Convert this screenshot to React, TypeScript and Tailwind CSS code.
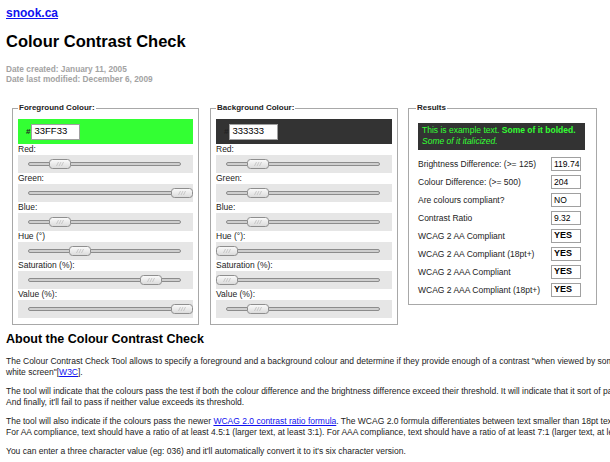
import React from "react";

function Handle() {
  return (
    <svg width="22" height="10" viewBox="0 0 22 10">
      <defs>
        <linearGradient id="hg" x1="0" y1="0" x2="0" y2="1">
          <stop offset="0" stopColor="#fbfbfb" />
          <stop offset="1" stopColor="#dadada" />
        </linearGradient>
      </defs>
      <rect x="0.5" y="0.5" width="21" height="9" rx="3" fill="url(#hg)" stroke="#8e8e8e" />
      <path d="M7.5 7 L9.5 3 M10 7 L12 3 M12.5 7 L14.5 3" stroke="#bdbdbd" strokeWidth="0.8" fill="none" />
    </svg>
  );
}

function Slider({ label, frac, range }: { label: string; frac: number; range: number }) {
  return (
    <div>
      <div className="h-[11px] text-[8.5px] leading-[11px] text-[#222]">{label}</div>
      <div className="relative flex h-[18px] items-center bg-[#e6e6e6] pl-[10px] pr-[12px]">
        <div className="h-[4px] flex-1 rounded-full border border-[#8c8c8c] bg-[#cfcfcf]" />
        <div className="absolute top-[4px] flex" style={{ left: `${Math.round(frac * range)}px` }}>
          <Handle />
        </div>
      </div>
    </div>
  );
}

function ColourPanel({
  title,
  bg,
  value,
  widthClass,
  sliders,
  range,
}: {
  title: string;
  bg: string;
  value: string;
  widthClass: string;
  sliders: [string, number][];
  range: number;
}) {
  return (
    <fieldset className={`${widthClass} border border-[#a8a8a8] px-[5px] pb-[6px] pt-[6px]`}>
      <legend className="px-[1px] text-[8px] font-bold leading-[10px] text-[#222]">{title}</legend>
      <div className={`flex h-[25px] items-center pl-[8px] ${bg}`}>
        <span className="mr-[1px] text-[8px] font-bold text-[#222]">#</span>
        <div className="flex h-[16px] w-[49px] items-center border border-[#a0a0a0] bg-white px-[2px] text-[9.5px] text-black">
          {value}
        </div>
      </div>
      {sliders.map(([l, f]) => (
        <Slider key={l} label={l} frac={f} range={range} />
      ))}
    </fieldset>
  );
}

function ResultRow({ label, value, bold }: { label: string; value: string; bold?: boolean }) {
  return (
    <div className="flex h-[18px] items-center">
      <span className="flex-1 text-[8.5px] text-[#222]">{label}</span>
      <div
        className={`mr-[4px] flex h-[14px] w-[30px] items-center border border-[#a0a0a0] px-[2px] text-black ${
          bold ? "text-[9px] font-bold" : "text-[8.5px]"
        }`}
      >
        {value}
      </div>
    </div>
  );
}

export default function App() {
  return (
    <div className="w-full overflow-hidden bg-white px-[6px] pt-[6px] font-['Liberation_Sans',Arial,sans-serif] text-[#222]">
      <div className="h-[14px] text-[12px] font-bold leading-[14px]">
        <a className="text-[#1010f0] underline" href="#">
          snook.ca
        </a>
      </div>
      <h1 className="mt-[12px] text-[16.5px] font-bold leading-[19px] text-black">Colour Contrast Check</h1>
      <div className="mt-[13px] text-[8.3px] font-bold leading-[10px] text-[#a3a3a3]">
        <div>Date created: January 11, 2005</div>
        <div>Date last modified: December 6, 2009</div>
      </div>

      <div className="mt-[19px] ml-[6px] flex items-start">
        <ColourPanel
          title="Foreground Colour:"
          bg="bg-[#33ff33]"
          value="33FF33"
          widthClass="w-[187px]"
          range={153}
          sliders={[
            ["Red:", 0.2],
            ["Green:", 1],
            ["Blue:", 0.2],
            ["Hue (°)", 1 / 3],
            ["Saturation (%):", 0.8],
            ["Value (%):", 1],
          ]}
        />
        <div className="ml-[11px]">
          <ColourPanel
            title="Background Colour:"
            bg="bg-[#333333]"
            value="333333"
            widthClass="w-[188px]"
            range={154}
            sliders={[
              ["Red:", 0.2],
              ["Green:", 0.2],
              ["Blue:", 0.2],
              ["Hue (°):", 0],
              ["Saturation (%):", 0],
              ["Value (%):", 0.2],
            ]}
          />
        </div>
        <fieldset className="ml-[10px] w-[189px] border border-[#a8a8a8] pb-[5px] pl-[9px] pr-[11px] pt-[10px]">
          <legend className="-ml-[2px] px-[1px] text-[8px] font-bold leading-[10px] text-[#222]">Results</legend>
          <div className="h-[27px] bg-[#333333] px-[4px] pt-[2px] text-[8.5px] leading-[11px] text-[#33ff33]">
            <div className="whitespace-nowrap">
              This is example text. <b>Some of it bolded.</b>
            </div>
            <div className="italic">Some of it italicized.</div>
          </div>
          <div className="mt-[5px]">
            <ResultRow label="Brightness Difference: (>= 125)" value="119.74" />
            <ResultRow label="Colour Difference: (>= 500)" value="204" />
            <ResultRow label="Are colours compliant?" value="NO" />
            <ResultRow label="Contrast Ratio" value="9.32" />
            <ResultRow label="WCAG 2 AA Compliant" value="YES" bold />
            <ResultRow label="WCAG 2 AA Compliant (18pt+)" value="YES" bold />
            <ResultRow label="WCAG 2 AAA Compliant" value="YES" bold />
            <ResultRow label="WCAG 2 AAA Compliant (18pt+)" value="YES" bold />
          </div>
        </fieldset>
      </div>

      <h2 className="mt-[7px] text-[12.5px] font-bold leading-[15px] text-black">About the Colour Contrast Check</h2>
      <div className="mt-[9px] whitespace-nowrap text-[8.5px] leading-[11px] text-[#222]">
        <p>
          The Colour Contrast Check Tool allows to specify a foreground and a background colour and determine if they
          provide enough of a contrast "when viewed by someone having color deficits or when viewed on a black and
          <br />
          white screen"[
          <a className="text-[#1010f0] underline" href="#">
            W3C
          </a>
          ].
        </p>
        <p className="mt-[8px]">
          The tool will indicate that the colours pass the test if both the colour difference and the brightness
          difference exceed their threshold. It will indicate that it sort of passes if only one of the values exceeds
          its threshold.
          <br />
          And finally, it'll fail to pass if neither value exceeds its threshold.
        </p>
        <p className="mt-[7.5px]">
          The tool will also indicate if the colours pass the newer{" "}
          <a className="text-[#1010f0] underline" href="#">
            WCAG 2.0 contrast ratio formula
          </a>
          . The WCAG 2.0 formula differentiates between text smaller than 18pt text and text 18pt+ or 14pt+ bold.
          <br />
          For AA compliance, text should have a ratio of at least 4.5:1 (larger text, at least 3:1). For AAA
          compliance, text should have a ratio of at least 7:1 (larger text, at least 4.5:1).
        </p>
        <p className="mt-[8px]">
          You can enter a three character value (eg: 036) and it'll automatically convert it to it's six character
          version.
        </p>
      </div>
    </div>
  );
}
